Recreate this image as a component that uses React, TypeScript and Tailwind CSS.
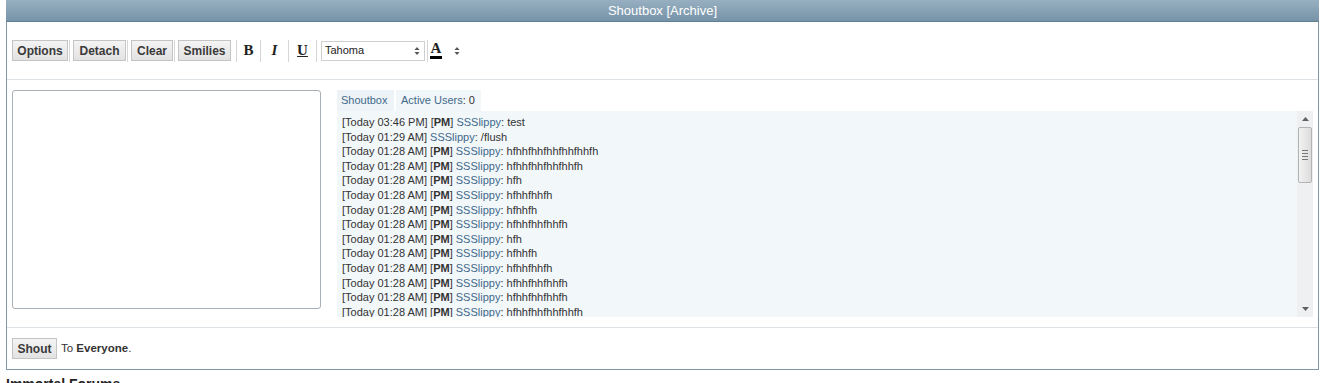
import React from 'react';

const messages = [
  { time: '03:46 PM', pm: true, text: 'test' },
  { time: '01:29 AM', pm: false, text: '/flush' },
  { time: '01:28 AM', pm: true, text: 'hfhhfhhfhhfhhfhhfh' },
  { time: '01:28 AM', pm: true, text: 'hfhhfhhfhhfhhfh' },
  { time: '01:28 AM', pm: true, text: 'hfh' },
  { time: '01:28 AM', pm: true, text: 'hfhhfhhfh' },
  { time: '01:28 AM', pm: true, text: 'hfhhfh' },
  { time: '01:28 AM', pm: true, text: 'hfhhfhhfhhfh' },
  { time: '01:28 AM', pm: true, text: 'hfh' },
  { time: '01:28 AM', pm: true, text: 'hfhhfh' },
  { time: '01:28 AM', pm: true, text: 'hfhhfhhfh' },
  { time: '01:28 AM', pm: true, text: 'hfhhfhhfhhfh' },
  { time: '01:28 AM', pm: true, text: 'hfhhfhhfhhfh' },
  { time: '01:28 AM', pm: true, text: 'hfhhfhhfhhfhhfh' },
];

function ToolButton({ label, width }: { label: string; width: string }) {
  return (
    <button
      className={`${width} h-[21px] border border-[#c4c4c4] bg-gradient-to-b from-[#f4f4f4] to-[#e2e2e2] text-[12px] font-bold text-[#3a3a3a] leading-none`}
    >
      {label}
    </button>
  );
}

function Sep() {
  return <div className="w-px h-[22px] bg-[#d6d6d6] shrink-0" />;
}

function UpDown() {
  return (
    <svg width="6" height="10" viewBox="0 0 6 10" className="text-[#555]">
      <path d="M3 1 L5.5 4 H0.5 Z" fill="currentColor" />
      <path d="M3 9 L5.5 6 H0.5 Z" fill="currentColor" />
    </svg>
  );
}

export default function App() {
  return (
    <div className="w-[1329px] h-[383px] bg-white overflow-hidden font-['Liberation_Sans',Arial,sans-serif] text-[#333]">
      <div className="ml-[6px] w-[1313px]">
        {/* Header */}
        <div className="h-[22px] bg-gradient-to-b from-[#97afc1] to-[#7793a7] border-b border-[#627f92] flex items-center justify-center">
          <span className="text-[13px] text-white">Shoutbox [Archive]</span>
        </div>

        <div className="border-x border-b border-[#8198a8]">
          {/* Toolbar */}
          <div className="h-[58px] flex items-center pl-[5px] border-b border-[#dde2e6]">
            <ToolButton label="Options" width="w-[56px]" />
            <div className="ml-[1px] mr-[3px]"><Sep /></div>
            <ToolButton label="Detach" width="w-[53px]" />
            <div className="ml-[1px] mr-[3px]"><Sep /></div>
            <ToolButton label="Clear" width="w-[42px]" />
            <div className="ml-[1px] mr-[3px]"><Sep /></div>
            <ToolButton label="Smilies" width="w-[53px]" />
            <div className="ml-[5px]"><Sep /></div>
            <span className="w-[23px] text-center font-['Liberation_Serif',serif] font-bold text-[15px] text-[#222]">B</span>
            <Sep />
            <span className="w-[27px] text-center font-['Liberation_Serif',serif] font-bold italic text-[15px] text-[#222]">I</span>
            <Sep />
            <span className="w-[27px] text-center font-['Liberation_Serif',serif] font-bold underline text-[15px] text-[#222]">U</span>
            <Sep />
            <div className="ml-[4px] w-[104px] h-[20px] border border-[#cfcfcf] bg-white flex items-center justify-between pl-[3px] pr-[4px] text-[11px] text-[#222]">
              <span>Tahoma</span>
              <UpDown />
            </div>
            <div className="ml-[2px]"><Sep /></div>
            <div className="flex items-center gap-[12px] ml-[2px]">
              <span className="flex flex-col items-center">
                <span className="font-['Liberation_Serif',serif] font-bold text-[15px] leading-[13px] text-[#222]">A</span>
                <span className="w-[12px] h-[3px] bg-black mt-[1px]" />
              </span>
              <UpDown />
            </div>
          </div>

          {/* Main */}
          <div className="h-[248px] flex pt-[10px] pl-[5px] border-b border-[#dde2e6]">
            <div className="w-[309px] h-[219px] border border-[#a9b0b6] rounded-[3px] bg-white" />
            <div className="ml-[16px] flex-1 mr-[5px] flex flex-col">
              <div className="flex gap-[2px] h-[21px] text-[11px] text-[#41698a]">
                <div className="w-[57px] bg-[#edf3f7] pl-[4px] flex items-center">Shoutbox</div>
                <div className="w-[85px] bg-[#f1f6f9] pl-[5px] flex items-center">
                  Active Users<span className="text-[#333]">: 0</span>
                </div>
              </div>
              <div className="h-[206px] bg-[#f2f7fa] flex">
                <div className="flex-1 overflow-hidden pl-[5px] pt-[4px] text-[11px] leading-[14.6px]">
                  {messages.map((m, i) => (
                    <div key={i} className="whitespace-nowrap">
                      [Today {m.time}]{' '}
                      {m.pm && (
                        <>
                          [<b className="text-[#333]">PM</b>]{' '}
                        </>
                      )}
                      <span className="text-[#41698a]">SSSlippy</span>: {m.text}
                    </div>
                  ))}
                </div>
                {/* Scrollbar */}
                <div className="w-[16px] bg-[#eef0f2] flex flex-col items-center">
                  <div className="h-[16px] flex items-center justify-center">
                    <svg width="7" height="4" viewBox="0 0 7 4">
                      <path d="M3.5 0 L7 4 H0 Z" fill="#606060" />
                    </svg>
                  </div>
                  <div className="w-[14px] h-[56px] rounded-[2px] border border-[#b3b3b3] bg-gradient-to-r from-[#f2f2f2] to-[#dcdcdc] flex flex-col items-center justify-center gap-[2px]">
                    <span className="w-[6px] h-px bg-[#777]" />
                    <span className="w-[6px] h-px bg-[#777]" />
                    <span className="w-[6px] h-px bg-[#777]" />
                    <span className="w-[6px] h-px bg-[#777]" />
                  </div>
                  <div className="flex-1" />
                  <div className="h-[16px] flex items-center justify-center">
                    <svg width="7" height="4" viewBox="0 0 7 4">
                      <path d="M3.5 4 L7 0 H0 Z" fill="#606060" />
                    </svg>
                  </div>
                </div>
              </div>
            </div>
          </div>

          {/* Footer */}
          <div className="h-[41px] flex items-center pl-[5px] gap-[4px] text-[11.5px]">
            <ToolButton label="Shout" width="w-[45px]" />
            <span>
              To <b>Everyone</b>.
            </span>
          </div>
        </div>
      </div>
      <div className="pl-[6px] pt-[4px] text-[14px] font-bold text-[#222]">Immortal Forums</div>
    </div>
  );
}
